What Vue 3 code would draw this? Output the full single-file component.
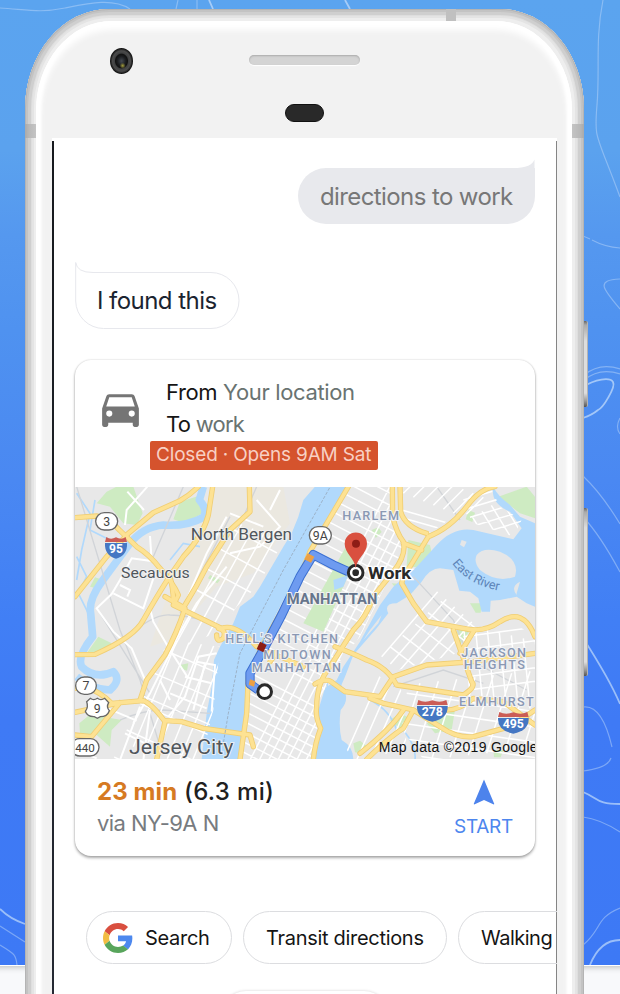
<script setup>
const chips = [
  { label: 'Search', logo: true, cls: 'search' },
  { label: 'Transit directions', cls: 'transit' },
  { label: 'Walking', cls: 'walking' },
]

// Parallel street lines: start point, step between lines, direction vector, number of lines
function lines(x, y, sx, sy, dx, dy, n) {
  let d = ''
  for (let i = 0; i < n; i++) d += `M${x + sx * i} ${y + sy * i}l${dx} ${dy}`
  return d
}

const manhattan = lines(540, 840, 26, 4, 440, -860, 24) + lines(520, 500, 14, -29, 520, 270, 20) + lines(505, 560, -2, 30, 500, 260, 9)
const jersey = lines(190, 800, 34, 12, 230, -560, 6) + lines(200, 640, 34, -68, 280, 120, 7) + lines(130, 830, 40, -80, 240, 110, 3)
const union = lines(280, 560, 36, 9, 330, -600, 8) + lines(380, 330, 34, -62, 260, 140, 6)
const queens = lines(960, 500, 38, -34, 260, 200, 7) + lines(935, 530, 26, 22, 190, -220, 9)
const elmhurst = lines(1050, 610, 55, -6, -75, 240, 9) + lines(1010, 640, -6, 45, 420, 60, 5) + lines(1180, 430, 36, 9, 20, 210, 7) + lines(1180, 470, 4, 40, 230, -30, 5)
const bronx = lines(1180, 130, 28, -18, 55, 90, 7) + lines(1180, 60, 10, 26, 150, -45, 5) + lines(1000, 40, 30, 12, 60, -60, 7) + lines(995, 90, 12, 26, 140, 40, 3)
const brooklyn = lines(820, 840, 40, 0, 110, -250, 5)

const streets = [
  'M232 20L170 90L165 135M172 35l50 55',
  'M240 168l5 75L185 235L150 300L125 342L80 385L130 455L185 505L225 600',
  'M130 340l90 45l35-105M240 385l10 40l50 85l55 85M150 315l30 15l-8 20M300 510l80-140l90-110',
  'M470 110l-60 110l-60 140M340 420l-40 100l-60 120l-50 90M440 520l-55 10l-40 120l-50 60',
  'M380 545l55 10l-10 140M405 550l-35 140M345 590l80 20M300 640l110 45M270 600l30 60',
  'M100 680l100 42M165 760l80 40M20 810l60 25M210 680l-60 160M240 690l-20 150',
  'M480 100l100 40M560 60l70 80l-60 60l-90 20M630 30l-30 60',
]

const highways = [
  'M15 113L80 108Q115 112 150 152L200 200Q240 225 270 265Q310 310 325 345L310 375L455 445Q500 430 560 500L700 560',
  'M15 350L110 230L175 160L250 98L330 62Q360 45 385 20',
  'M428 20L415 105Q400 165 340 230L295 295Q260 350 220 420Q195 470 75 523L15 524',
  'M285 350L345 385Q320 460 285 525L230 600L210 660',
  'M345 375Q380 320 410 260L480 150L540 95L538 20',
  'M300 290Q310 330 310 360',
  'M15 625L55 625Q90 635 125 670L220 662Q245 670 285 725L260 838M15 697L150 668M150 668L65 770L15 765',
  'M285 722L335 725L400 745L540 765L550 800',
  'M835 20L720 215Q690 300 580 490L535 590L530 700L510 838',
  'M445 445Q470 450 460 475Q440 490 440 465M600 520Q630 510 600 545',
  'M967 20L968 110Q980 160 1000 185Q1010 225 970 275L910 350Q890 410 850 450L780 560Q740 610 740 680Q735 710 752 745Q735 790 730 838',
  'M990 20L992 95Q1005 140 1070 160',
  'M1000 190L1055 210M1275 20Q1230 25 1190 80Q1140 145 1075 170L1020 260Q1000 280 995 310L1030 370L1070 425L1180 445Q1240 460 1290 425Q1360 380 1395 470',
  'M735 612Q770 590 790 610L825 635L930 650L970 590L1070 555L1210 545L1395 520',
  'M795 500Q850 520 890 540Q950 560 980 615L1180 645Q1220 620 1205 605L1150 450M1210 455L1170 520',
  'M870 820Q960 750 1000 690M900 655L940 670L1030 690L1110 740Q1160 775 1210 770L1320 740L1395 690',
  'M1030 690L1000 745Q960 770 890 838M1130 690Q1170 690 1210 655L1300 665L1395 735',
]

const water = [
  'M735 20L700 60L685 110L665 160L640 200L570 320L550 350L510 380L490 430L450 500L432 540L425 620L410 700L395 838L512 838L522 720L528 640L532 570L580 480L640 360L710 230L780 110L835 20Z',
  'M1270 20Q1280 45 1320 75L1350 110L1395 130V380L1370 370L1340 350L1290 360L1262 362L1260 395L1235 395L1225 355L1200 335L1168 332L1150 270L1110 265Q1080 265 1055 305L1020 345L980 370Q940 370 955 400L920 445L850 525L825 590L810 625L800 600L820 560L870 485L930 375L970 320L1040 260L1100 195Q1150 140 1210 150L1330 178L1355 145L1320 95Q1260 70 1270 20Z',
  'M765 625L800 600Q850 650 812 690Q805 740 815 780Q850 800 850 838H730Q740 800 755 755Q735 720 745 690Z',
]
const inlets = 'M400 20L388 60Q415 90 400 112Q350 140 280 135Q220 140 180 190L95 305Q55 360 62 400L68 470Q20 530 35 560Q75 600 130 575Q155 600 120 630Q70 630 20 590'
const creeks = 'M20 40l40 60l-25 110l-15 90M75 60l-15 90l60 30M20 230l30 60l-25 50l30 60M300 240l40-50l50 10M900 660Q960 690 980 750L1000 750Q1040 800 1035 838M780 690L770 600'
const parks = [
  'M140 20H190L218 100L200 135L160 130L120 80L80 70L110 35Z', 'M330 65L395 45L398 100L345 130L310 118Z', 'M60 320l15-28l25 8l-15 26Z',
  'M50 520L85 470L125 490L75 525Z', 'M28 730L70 695L125 715L155 720L125 750L120 800L80 765L30 760Z', 'M330 555l25-5l-4 22l-22-8Z', 'M420 285l30 15l-8 10l-28-15Z',
  'M1015 180L1080 195L1090 245L1045 262L1010 260Z', 'M965 310L1030 315L1030 335L1000 350Z',
  'M1285 50L1370 20L1395 50V115L1350 100Z', 'M1195 90l20 8l-8 28l-20-8Z', 'M1160 450H1200L1170 495Z', 'M1200 370h35l-3 28h-15Z',
  'M960 720l30-20l30 15l-25 35Z', 'M1070 730l85-40l-10 60l-50 10Z', 'M850 790l20-8l25 20l-15 20l-25-5Z', 'M905 150l20-8l10 14l-18 18Z', 'M1270 810h30l-8 22h-20Z',
]
const rails = 'M20 20L150 450L210 600L270 800M90 400L240 640M160 480Q250 400 300 405Q400 410 470 450M340 20L250 230M480 110L330 400M560 20L490 180M150 720Q220 690 280 690L420 700M1030 290L1150 420L1200 540L1370 630M970 620L1120 570L1240 610M1100 20L1170 120'
</script>

<template>
  <main class="scene">
    <svg class="backdrop" width="620" height="994" viewBox="0 0 620 994" aria-hidden="true">
      <g fill="none" stroke="#b9d6fa" stroke-opacity=".5" stroke-width="1.2">
        <path d="M0 8C30 10 40 13 65 8S113-2 130 9M178 0L176 9M197 0V9" />
        <path d="M209 0L213 9M345 0L350 9" stroke-width="1.8" stroke-opacity=".8" />
        <path d="M603 0C595 40 600 70 597 105S596 132 620 197M583 236L590 239M592 240Q605 247 620 248" />
        <path d="M620 279C595 280 603 289 620 309M584 375Q600 362 620 369M584 380Q600 367 620 374" />
        <path d="M583 387C595 379 610 377 613 382S603 408 598 410Q592 415 583 418" stroke-width="1.8" stroke-opacity=".8" />
        <path d="M620 418Q615 427 620 434M583 476Q602 494 620 524M584 518Q600 535 620 572" />
        <path d="M583 638Q610 680 620 704" stroke-width="1.7" stroke-opacity=".75" />
        <path d="M583 707Q602 704 612 747M583 771Q608 768 611 758M583 817Q600 819 620 832" />
        <path d="M583 792C600 799 596 804 620 804M590 965Q600 940 620 940M0 909Q10 919 25 924" stroke-width="1.8" stroke-opacity=".75" />
        <path d="M583 945C602 930 595 918 620 908M0 926L25 942M0 945C15 954 16 955 17 965" />
      </g>
    </svg>
    <div class="ground"></div>

    <div class="phone">
      <i class="button power"></i>
      <i class="button volume"></i>
      <i class="antenna top"></i>
      <i class="antenna left"></i>
      <i class="antenna right"></i>
      <div class="face">
        <div class="hardware">
          <i class="camera"></i>
          <i class="speaker"></i>
          <i class="sensor"></i>
        </div>

        <section class="screen">
          <div class="bubble query">
            <svg class="tail" width="30" height="30" viewBox="0 0 30 30"><path d="M0 9.500C15 9 26 9 29.500 .5V30H0Z" fill="#e8e9ed" /></svg>
            <span>directions to work</span>
          </div>
          <div class="bubble reply">
            <svg class="outline" width="166" height="68" viewBox="0 0 166 68"><path d="M.7.5V39A28 28 0 0 0 28.500 66.500H136A28 28 0 0 0 136 10.500H18Q2 10.500 .7.5Z" fill="#fff" stroke="#e7e8ed" /></svg>
            <span>I found this</span>
          </div>

          <article class="card">
            <header class="trip">
              <svg class="car" width="49" height="49" viewBox="0 0 24 24"><path fill="#757575" fill-rule="evenodd" d="M18.920 6.010C18.720 5.420 18.160 5 17.500 5h-11c-.66 0-1.210.42-1.420 1.010L3 12v8c0 .55.45 1 1 1h1c.55 0 1-.45 1-1v-1h12v1c0 .55.45 1 1 1h1c.55 0 1-.45 1-1v-8l-2.080-5.990zM6.500 16a1.500 1.500 0 1 1 0-3 1.500 1.500 0 0 1 0 3zm11 0a1.500 1.500 0 1 1 0-3 1.500 1.500 0 0 1 0 3zM5 11l1.500-4.500h11L19 11H5z" /></svg>
              <p class="line"><span class="from"><b>From</b> Your location</span></p>
              <p class="line"><span class="to"><b>To</b> work</span></p>
              <p class="status"><span>Closed · Opens 9AM Sat</span></p>
            </header>

            <svg class="map" width="460" height="272" viewBox="15 21 1380 816" preserveAspectRatio="none">
              <defs>
                <clipPath id="manhattan"><path d="M835 20H965L975 130L1000 200L930 350L870 470L780 580L745 690L735 838H515L530 600L580 490L700 260Z" /></clipPath>
                <clipPath id="jersey"><path d="M225 600L300 480L450 500L430 690L395 838H130L180 710Z" /></clipPath>
                <clipPath id="union"><path d="M350 390L480 120L560 150L650 170L560 320L500 380L455 450L300 520Z" /></clipPath>
                <clipPath id="queens"><path d="M930 500L1080 315L1210 430L1240 440L1150 525L1090 540L950 580L880 550Z" /></clipPath>
                <clipPath id="elmhurst"><path d="M890 600L970 560L1170 530V440L1240 450L1310 415L1395 470V838H1060L940 670Z" /></clipPath>
                <clipPath id="bronx"><path d="M970 20H1260L1290 80L1355 120L1330 170L1210 130L1180 90L1070 165L990 130Z" /></clipPath>
                <clipPath id="brooklyn"><path d="M850 500L900 500L1000 640L1010 800L900 838H850L810 780L820 700Z" /></clipPath>
              </defs>
              <rect x="15" y="20" width="1380" height="820" fill="#e8e8e8" />
              <path d="M440 20H640L660 130L550 280L440 320L300 480L240 500L290 350Z" fill="#ebe8e0" />
              <path v-for="(d, i) in parks" :key="'p' + i" :d="d" fill="#ceebc2" />
              <path :d="inlets" fill="none" stroke="#b1d9fc" stroke-width="23" stroke-linejoin="round" />
              <path :d="creeks" fill="none" stroke="#b1d9fc" stroke-width="5" />
              <path v-for="(d, i) in water" :key="'w' + i" :d="d" fill="#b1d9fc" />
              <g fill="#e5e6e7">
                <path d="M1220 225Q1240 200 1290 215Q1350 240 1335 290Q1280 310 1230 270Q1210 245 1220 225Z" />
                <path d="M1175 180l15 5l-8 17l-12-8ZM1340 345Q1320 320 1350 305L1340 340ZM900 450L935 405L925 430L880 480Z" />
              </g>
              <path :d="rails" fill="none" stroke="#d1d4d8" stroke-width="4" />
              <g fill="none" stroke="#fff" stroke-width="4.500">
                <path :d="manhattan" clip-path="url(#manhattan)" />
                <path :d="jersey" clip-path="url(#jersey)" />
                <path :d="union" clip-path="url(#union)" />
                <path :d="queens" clip-path="url(#queens)" />
                <path :d="elmhurst" clip-path="url(#elmhurst)" />
                <path :d="bronx" clip-path="url(#bronx)" />
                <path :d="brooklyn" clip-path="url(#brooklyn)" />
                <path v-for="(d, i) in streets" :key="'s' + i" :d="d" stroke-width="6" />
              </g>
              <path d="M825 205L862 225L760 455L700 430Z" fill="#ceebc2" />
              <path d="M790 300L835 285L820 320L793 330Z" fill="#b1d9fc" />
              <g fill="none" stroke-linejoin="round" stroke-linecap="round">
                <path v-for="(d, i) in highways" :key="'c' + i" :d="d" stroke="#f0ce74" stroke-width="16" />
                <path v-for="(d, i) in highways" :key="'h' + i" :d="d" stroke="#fde293" stroke-width="11" />
                <path d="M778 25L640 270L510 520L475 700L460 790" stroke="#98aabd" stroke-width="2.500" stroke-dasharray="7 7" />
              </g>

              <g fill="none" stroke-linejoin="round">
                <path d="M835 275L790 255L730 224L690 290L635 405L585 500L540 580V612L565 630" stroke="#3b6fd0" stroke-width="28" />
                <path d="M835 275L790 255L730 224L690 290L635 405L585 500L540 580V612L565 630" stroke="#6e9bf0" stroke-width="22" />
              </g>
              <path d="M713 220l20 10l-10 18l-20-10ZM540 598l16 6l-4 16l-16-6Z" fill="#eca044" />
              <circle cx="584" cy="635" r="20.500" fill="#fff" stroke="#292929" stroke-width="9" />
              <circle cx="857" cy="278" r="22" fill="#fff" stroke="#292929" stroke-width="9" />
              <circle cx="857" cy="278" r="10" fill="#292929" />
              <path d="M857 265C855 235 824 220 824 191A33 33 0 0 1 891 191C891 220 860 235 857 265Z" fill="#d9503f" />
              <circle cx="858" cy="191" r="12" fill="#8d1d16" />

              <g class="roads">
                <g v-for="r in [{ x: 110, y: 124, t: '3', w: 66 }, { x: 48, y: 617, t: '7', w: 62 }, { x: 751, y: 166, t: '9A', w: 66 }, { x: 45, y: 802, t: '440', w: 84 }]" :key="r.t">
                  <rect :x="r.x - r.w / 2" :y="r.y - 26" :width="r.w" height="52" rx="26" fill="#fff" stroke="#686868" stroke-width="4" />
                  <text :x="r.x" :y="r.y + 13" text-anchor="middle" :font-size="r.t === '440' ? 35 : 37">{{ r.t }}</text>
                </g>
                <path d="M50 665L61 655Q71 663 82 655Q93 663 104 655L116 668Q108 681 118 692Q112 710 91 710L82 715L73 710Q52 711 46 694Q56 681 50 665Z" fill="#fff" stroke="#686868" stroke-width="4" />
                <text x="82" y="699" text-anchor="middle" font-size="37">9</text>
              </g>
              <g class="shields">
                <g v-for="s in [{ x: 138, y: 171, w: 66, t: '95', f: 36 }, { x: 1087, y: 660, w: 92, t: '278', f: 37 }, { x: 1330, y: 696, w: 92, t: '495', f: 37 }]" :key="s.t" :transform="`translate(${s.x} ${s.y})`">
                  <path :d="`M${-s.w / 2 + 4} 0Q${-s.w / 4} 10 0 1Q${s.w / 4} 10 ${s.w / 2 - 4} 0L${s.w / 2} 15H${-s.w / 2}Z`" fill="#cb5d56" />
                  <path :d="`M${-s.w / 2} 18H${s.w / 2}Q${s.w / 2 + 2} 55 0 65Q${-s.w / 2 - 2} 55 ${-s.w / 2} 18Z`" fill="#4577c3" />
                  <text y="49" text-anchor="middle" :font-size="s.f">{{ s.t }}</text>
                </g>
              </g>

              <g class="places">
                <text x="153" y="293" font-size="46" textLength="206" lengthAdjust="spacingAndGlyphs">Secaucus</text>
                <text x="362" y="180" font-size="49" textLength="304" lengthAdjust="spacingAndGlyphs">North Bergen</text>
                <text x="177" y="821" font-size="58" textLength="313" lengthAdjust="spacingAndGlyphs">Jersey City</text>
              </g>
              <g class="areas">
                <text x="817" y="119" textLength="170">HARLEM</text>
                <text x="466" y="488" textLength="338">HELL'S KITCHEN</text>
                <text x="580" y="536" textLength="202">MIDTOWN</text>
                <text x="545" y="575" textLength="268">MANHATTAN</text>
                <text x="1174" y="530" textLength="194">JACKSON</text>
                <text x="1181" y="568" textLength="184">HEIGHTS</text>
                <text x="1167" y="679" textLength="224">ELMHURST</text>
              </g>
              <path d="M570 485l20 10l-10 22l-20-10Z" fill="#8d1d13" />
              <text class="borough" x="650" y="372" textLength="272" lengthAdjust="spacingAndGlyphs">MANHATTAN</text>
              <text class="work" x="894" y="297" textLength="130" lengthAdjust="spacingAndGlyphs">Work</text>
              <path id="river" d="M1146 250Q1200 320 1300 334" fill="none" />
              <text class="river"><textPath href="#river" textLength="166">East River</textPath></text>
              <text class="credit" x="926" y="816" textLength="477">Map data ©2019 Google</text>
            </svg>

            <footer class="summary">
              <div>
                <p class="time"><span><b>23 min</b> (6.3 mi)</span></p>
                <p class="via"><span>via NY-9A N</span></p>
              </div>
              <div class="start">
                <svg width="22" height="26" viewBox="0 0 22 26"><path d="M11 .5L21.300 25L20.800 25.500L11 21L1.200 25.500L.7 25Z" fill="#4d83ec" /></svg>
                <span>START</span>
              </div>
            </footer>
          </article>

          <nav class="chips">
            <span v-for="c in chips" :key="c.label" class="chip" :class="c.cls">
              <svg v-if="c.logo" width="30" height="30" viewBox="0 0 48 48">
                <path fill="#d94f3f" d="M24 9.500c3.540 0 6.710 1.220 9.210 3.600l6.850-6.850C35.900 2.380 30.470 0 24 0 14.620 0 6.510 5.380 2.560 13.220l7.980 6.190C12.430 13.720 17.740 9.500 24 9.500z" />
                <path fill="#4d88ee" d="M46.980 24.550c0-1.570-.15-3.090-.38-4.550H24v9.020h12.940c-.58 2.960-2.260 5.480-4.780 7.180l7.730 6c4.510-4.180 7.090-10.360 7.090-17.650z" />
                <path fill="#f2bd42" d="M10.530 28.590c-.48-1.450-.76-2.990-.76-4.590s.27-3.140.76-4.590l-7.980-6.190C.92 16.460 0 20.120 0 24s.92 7.540 2.560 10.780l7.970-6.190z" />
                <path fill="#58a55c" d="M24 48c6.480 0 11.930-2.130 15.890-5.810l-7.730-6c-2.150 1.450-4.920 2.300-8.160 2.300-6.260 0-11.570-4.220-13.470-9.910l-7.980 6.190C6.510 42.620 14.620 48 24 48z" />
              </svg>
              <span>{{ c.label }}</span>
            </span>
          </nav>
          <div class="next"></div>
        </section>
      </div>
    </div>
  </main>
</template>

<style>
body { margin: 0; overflow: hidden; }
</style>

<style scoped>
* { box-sizing: border-box; }
p { margin: 0; }
.scene { position: relative; width: 620px; height: 994px; overflow: hidden; padding: 9px 36px 0 25px; background: linear-gradient(#5ba4ef 0, #5ba2ee 150px, #5598ef 235px, #4f92f0 330px, #4a88f2 480px, #417ff5 620px, #3f7af5 720px, #3d79f5 965px); font-family: Inter, "Liberation Sans", sans-serif; }
.backdrop { position: absolute; inset: 0; }
.ground { position: absolute; left: 0; right: 0; top: 965px; height: 29px; background: linear-gradient(#fff 0, #fff 1px, #cdd0d1 1px, #dfe1e2 3px, #f2f3f5 6px, #f8f9fb 9px); }

.phone { position: relative; width: 559px; height: 1000px; padding: 12px 12px 0 11px; border-radius: 84px 84px 0 0 / 100px 100px 0 0; background: #eee; box-shadow: inset 0 0 0 1px #b4b4b4, inset 0 0 0 3px #c3c3c3, inset 0 0 0 6px #cfcfcf, inset 0 0 0 7px #dedede, inset 0 0 0 9px #e4e4e4; }
.button { position: absolute; right: -4px; width: 4px; border-radius: 0 2px 2px 0; background: linear-gradient(#666 0, #aaa 4px, #ddd 20px, #ddd calc(100% - 14px), #999 calc(100% - 6px), #555 100%); border-right: 1px solid #b4b4b4; }
.power { top: 312px; height: 86px; }
.volume { top: 499px; height: 168px; }
.antenna { position: absolute; background: #c0c0c0; }
.antenna.top { left: 421px; top: 0; width: 10px; height: 12px; }
.antenna.left { left: 0; top: 115px; width: 11px; height: 14px; background: linear-gradient(90deg, #aaa, #b8b8b8 4px, #c4c4c4); }
.antenna.right { right: 0; top: 115px; width: 12px; height: 14px; background: linear-gradient(270deg, #aaa, #b8b8b8 4px, #c4c4c4); }

.face { height: 988px; padding-left: 16px; border-radius: 76px 76px 0 0 / 90px 90px 0 0; background: #f2f2f2; box-shadow: inset 0 5px 6px 4px #fff, inset 4px 0 3px 1px #fff, inset -4px 0 3px 1px #fff; overflow: hidden; }
.hardware { height: 117px; width: 505px; padding-top: 27px; display: grid; grid-template-columns: 197px 1fr; grid-template-rows: 26px auto; align-items: start; }
.camera { margin-left: 58px; width: 23px; height: 26px; border-radius: 50%; background: radial-gradient(circle at 55% 68%, #a5a03b 0, #777334 1px, transparent 3px), radial-gradient(ellipse, #444950 0, #1c1e21 4px, #111 6px, #3f4041 7px, #4b4b4b 9px, #151515 11px); }
.speaker { width: 111px; height: 10px; margin-top: 7px; border-radius: 5px; background: #d4d4d4; box-shadow: inset 0 1px 2px #aaa, 0 1px 1px #fff; }
.sensor { grid-column: 2; margin-left: 36px; margin-top: 30px; width: 39px; height: 18px; border-radius: 9px; background: #292929; border: 1px solid #111; }

.screen { width: 505px; height: 860px; padding: 30px 22px 0 23px; overflow: hidden; background: linear-gradient(#16191d, #252933) left 3px / 2px 100% no-repeat, linear-gradient(#858585, #858585) right 3px / 1px 100% no-repeat, #fff; display: flex; flex-direction: column; align-items: flex-start; }
.bubble { position: relative; height: 56px; display: flex; align-items: center; font-size: 24px; white-space: nowrap; flex: none; }
.bubble > span { position: relative; }
.query { width: 237px; align-self: flex-end; padding-left: 22px; border-radius: 28px 0 28px 28px; background: #e8e9ed; color: #777; }
.query span { letter-spacing: -.6px; }
.tail { position: absolute; right: 0; top: -9px; }
.reply { margin-top: 48px; width: 164px; padding-left: 22px; color: #1b2430; letter-spacing: -.55px; }
.outline { position: absolute; left: 0; top: -10px; }
.card { position: relative; flex: none; width: 460px; height: 496px; margin-top: 32px; border-radius: 16px; background: #fff; box-shadow: 0 0 2px rgba(0, 0, 0, .2), 0 2px 3px rgba(0, 0, 0, .32); }
.trip { height: 127px; display: grid; grid-template-columns: 91px 1fr; grid-template-rows: 32px 32px 30px; padding-top: 16px; white-space: nowrap; }
.car { grid-row: 1 / 4; margin: 8px 0 0 21px; }
.line { grid-column: 2; line-height: 32px; font-size: 22px; color: #697371; letter-spacing: -.36px; }
.to { letter-spacing: -.75px; }
.line b { font-weight: 400; color: #151515; }
.status { grid-column: 2; justify-self: start; margin: 1px 0 0 -16px; width: 228px; height: 29px; padding-left: 6px; border-radius: 2px; background: #d5532d; color: #f8d0c4; font-size: 19px; line-height: 28px; letter-spacing: -.17px; }
.map { display: block; }
.summary { height: 97px; display: flex; justify-content: space-between; padding: 16px 22px 0 22px; white-space: nowrap; }
.time, .via { line-height: 32px; }
.time { font-size: 24px; font-weight: 500; color: #202020; letter-spacing: .34px; }
.time span { position: relative; top: 1px; }
.time b { font-weight: 700; color: #d67a22; letter-spacing: .1px; }
.via { font-size: 22px; color: #777b80; letter-spacing: -.55px; }
.start { display: flex; flex-direction: column; align-items: center; padding-top: 4px; color: #4d86ee; font-size: 19px; line-height: 28px; letter-spacing: -.3px; }
.start span { margin-top: 8px; }
.chips { flex: none; display: flex; gap: 11px; margin: 55px 0 0 11px; }
.chip { flex: none; display: flex; align-items: center; height: 53px; border: 1px solid #dcdde0; border-radius: 27px; font-size: 20px; color: #151515; white-space: nowrap; letter-spacing: -.3px; }
.search { width: 146px; padding-left: 16px; gap: 12px; }
.transit { width: 204px; padding-left: 22px; }
.walking { width: 200px; padding-left: 22px; letter-spacing: -.5px; }
.next { flex: none; width: 168px; height: 50px; margin: 27px 0 0 146px; border-radius: 26px; box-shadow: 0 0 3px rgba(0, 0, 0, .18); }

.roads, .shields, .places { font-family: Roboto, sans-serif; }
.roads { fill: #444; }
.shields { fill: #fff; font-weight: 700; }
.places { fill: #50565c; stroke: #f2f2f2; stroke-width: 5px; paint-order: stroke; font-weight: 400; }
.areas { font: 500 38px Roboto, sans-serif; fill: #8a98b3; stroke: #f1f2f4; stroke-width: 6px; paint-order: stroke; }
.borough { font: 700 44px Roboto, sans-serif; fill: #66758c; stroke: #f2f2f2; stroke-width: 6px; paint-order: stroke; }
.work { font: 700 50px Roboto, sans-serif; fill: #292929; stroke: #fff; stroke-width: 8px; paint-order: stroke; }
.river { font: 38px Roboto, sans-serif; fill: #5c84b8; }
.credit { font: 42px "Liberation Sans", sans-serif; fill: #111; }
</style>
